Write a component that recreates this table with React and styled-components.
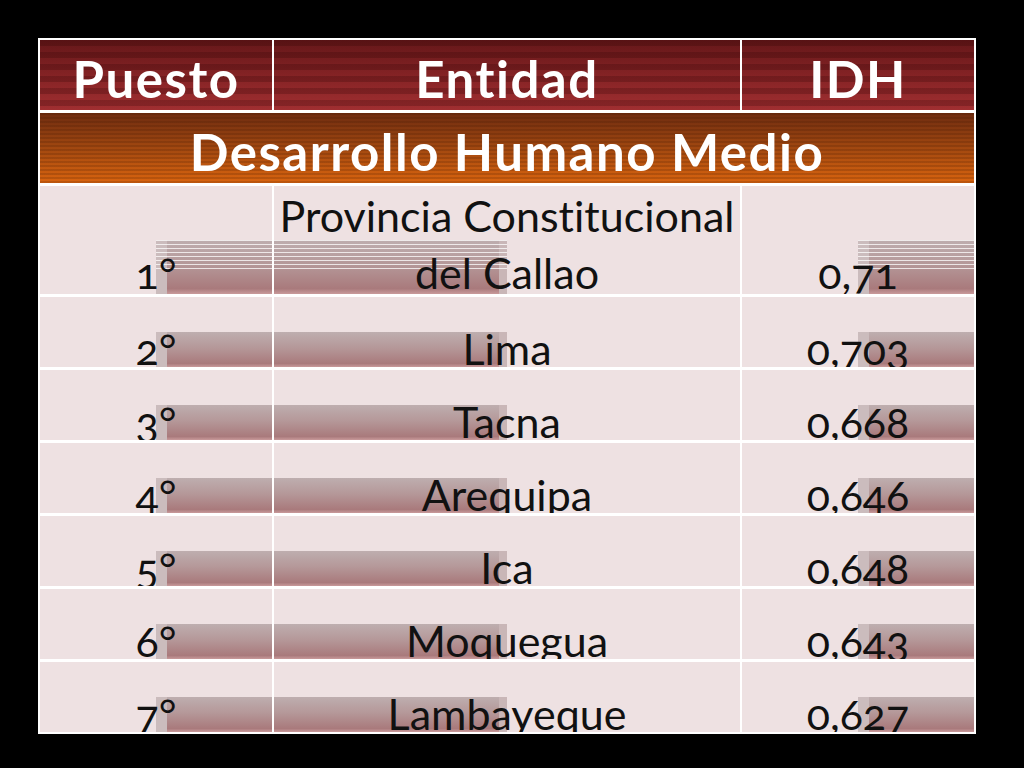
import React from 'react'
import styled, { createGlobalStyle, css } from 'styled-components'

const GlobalStyle = createGlobalStyle`
    html, body {
        margin: 0;
        padding: 0;
        background: #000;
    }
    body {
        font-family: Lato, "Open Sans", sans-serif;
        font-variant-ligatures: no-common-ligatures;
    }
`

const Slide = styled.div`
    width: 1024px;
    height: 768px;
    background: #000;
    padding: 38px 0 0 38px;
    box-sizing: border-box;
`

const Table = styled.div`
    display: grid;
    grid-template-columns: 232px 466px 232px;
    grid-template-rows: 70px 70px 108px repeat(6, 70px);
    column-gap: 2px;
    row-gap: 3px;
    width: 938px;
    padding: 2px;
    box-sizing: border-box;
    background: #fff;
`

const HeadCell = styled.div`
    display: flex;
    align-items: center;
    justify-content: center;
    padding-top: 6px;
    color: #fff;
    font-weight: 700;
    font-size: 51px;
    letter-spacing: 1.5px;
    background:
        repeating-linear-gradient(to bottom, rgba(40, 0, 0, 0.22) 0 6px, transparent 6px 12px),
        linear-gradient(to bottom, #651719, #8a2527 60%, #a02f31);
`

const Banner = styled(HeadCell)`
    grid-column: 1 / -1;
    background:
        repeating-linear-gradient(to bottom, rgba(60, 20, 0, 0.18) 0 2px, transparent 2px 4px),
        linear-gradient(to bottom, #6f2c10, #9c4510 45%, #d9640f);
`

const barLayers = (side, tall) => css`
    background-color: #eee1e2;
    background-repeat: no-repeat;
    background-position: ${tall ? `${side} 71.4%,` : ''} ${side} bottom, ${side} bottom;
    background-size: ${tall ? '50% 30%,' : ''} 50% 50%, 50% 50%;
    background-image:
        ${tall ? 'repeating-linear-gradient(to bottom, rgba(255,255,255,0.75) 0 1px, transparent 1px 4px),' : ''}
        ${side === 'right'
            ? 'linear-gradient(to right, #cbbcbd 0 11px, transparent 11px)'
            : 'linear-gradient(to left, #c9b6b7 0 8px, transparent 8px)'},
        linear-gradient(to bottom, #beaeaf, #b59899 45%, #a97a7c 90%, #c99a9b);
`

const Cell = styled.div`
    display: flex;
    flex-direction: column;
    justify-content: flex-end;
    align-items: center;
    overflow: hidden;
    text-align: center;
    color: #111;
    font-size: 43px;
    line-height: 57px;
    font-variant-numeric: oldstyle-nums;
    ${({ $side, $tall }) => barLayers($side, $tall)}
`

const CellText = styled.div`
    margin-bottom: ${({ $tall }) => ($tall ? '-7px' : '-10px')};
`

const rows = [
    { puesto: '1°', entidad: ['Provincia Constitucional', 'del Callao'], idh: '0,71' },
    { puesto: '2°', entidad: ['Lima'], idh: '0,703' },
    { puesto: '3°', entidad: ['Tacna'], idh: '0,668' },
    { puesto: '4°', entidad: ['Arequipa'], idh: '0,646' },
    { puesto: '5°', entidad: ['Ica'], idh: '0,648' },
    { puesto: '6°', entidad: ['Moquegua'], idh: '0,643' },
    { puesto: '7°', entidad: ['Lambayeque'], idh: '0,627' },
]

const App = () => (
    <>
        <GlobalStyle />
        <Slide>
            <Table>
                <HeadCell>Puesto</HeadCell>
                <HeadCell>Entidad</HeadCell>
                <HeadCell>IDH</HeadCell>
                <Banner>Desarrollo Humano Medio</Banner>
                {rows.map((row, i) => {
                    const tall = i === 0
                    return (
                        <React.Fragment key={row.puesto}>
                            <Cell $side="right" $tall={tall}>
                                <CellText $tall={tall}>{row.puesto}</CellText>
                            </Cell>
                            <Cell $side="left" $tall={tall}>
                                <CellText $tall={tall}>
                                    {row.entidad.map(line => <div key={line}>{line}</div>)}
                                </CellText>
                            </Cell>
                            <Cell $side="right" $tall={tall}>
                                <CellText $tall={tall}>{row.idh}</CellText>
                            </Cell>
                        </React.Fragment>
                    )
                })}
            </Table>
        </Slide>
    </>
)

export default App
